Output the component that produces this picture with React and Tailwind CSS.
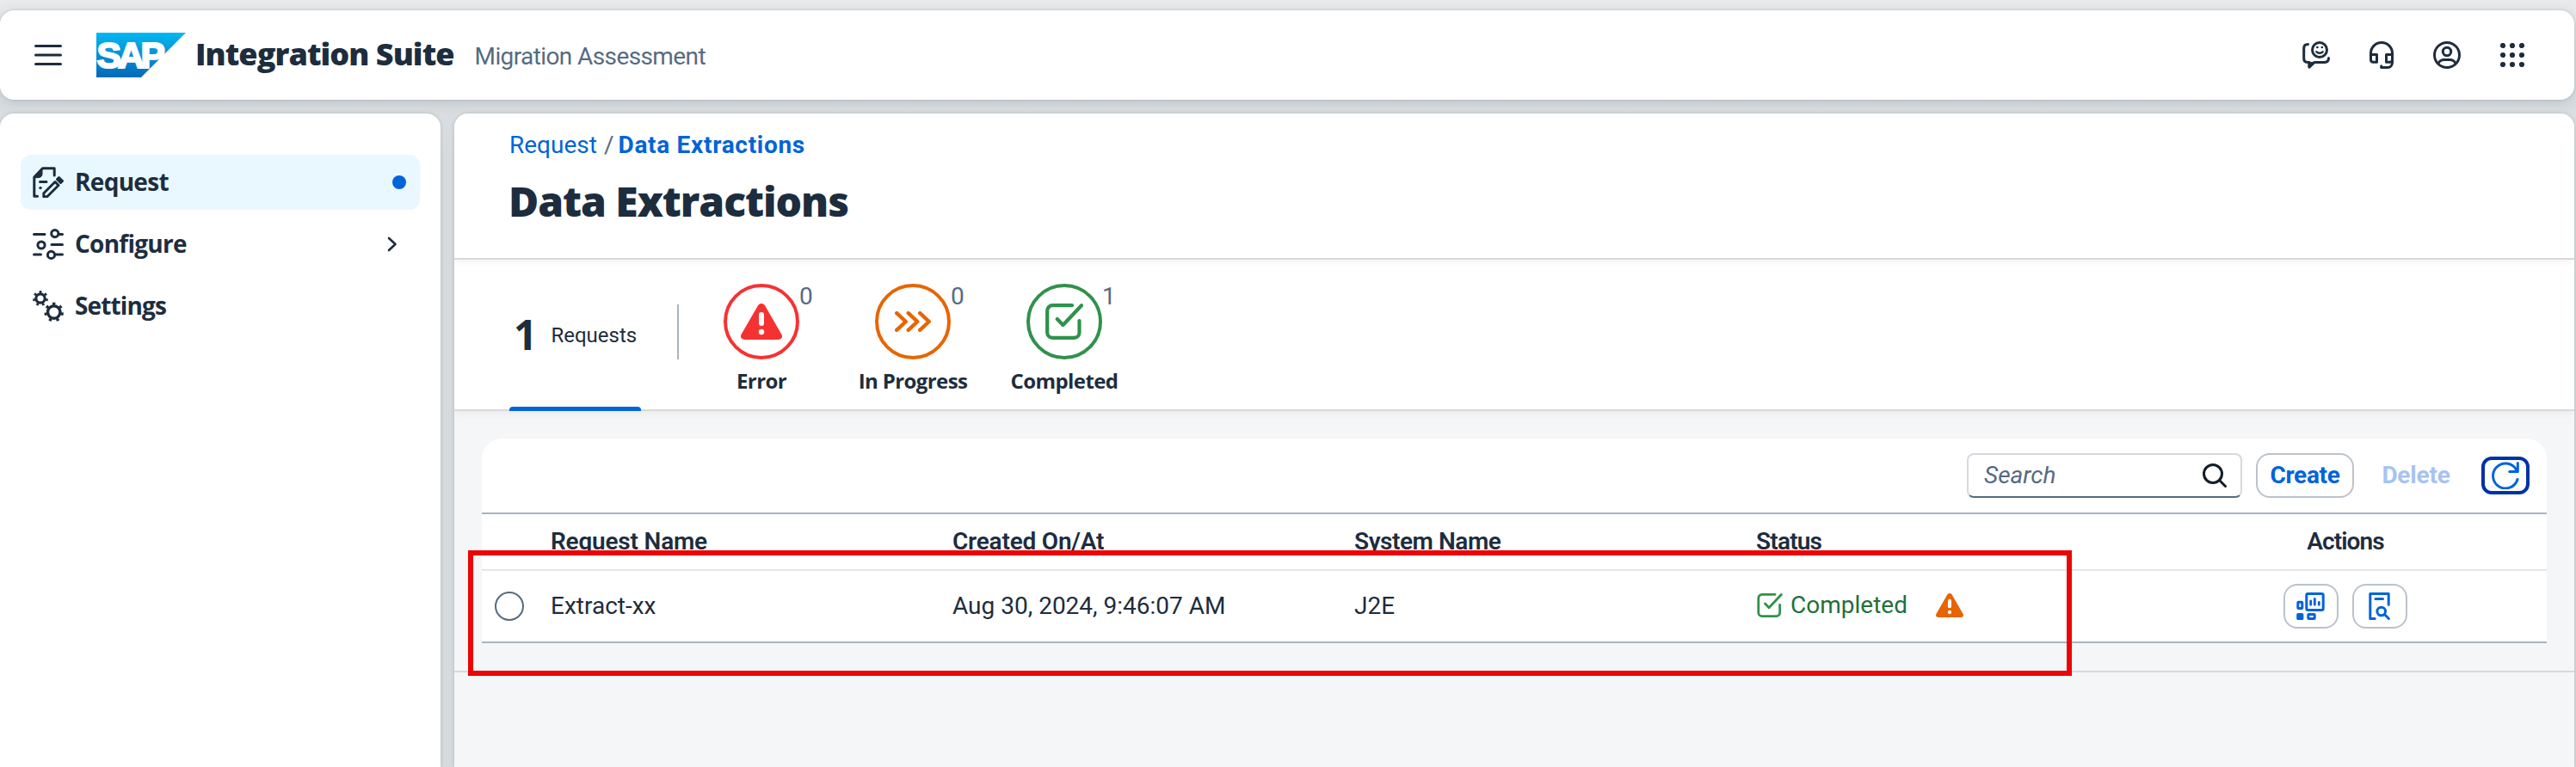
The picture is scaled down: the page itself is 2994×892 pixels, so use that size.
import React from "react";

const Stroke = ({ w, h, sw = 3, className = "", children }) => (
  <svg
    width={w}
    height={h}
    viewBox={`0 0 ${w} ${h}`}
    fill="none"
    stroke="currentColor"
    strokeWidth={sw}
    strokeLinecap="round"
    strokeLinejoin="round"
    className={`shrink-0 ${className}`}
  >
    {children}
  </svg>
);

const MenuIcon = () => (
  <Stroke w={32} h={24} sw={3}>
    <path d="M1.5 1.5h29M1.5 12h29M1.5 22.5h29" />
  </Stroke>
);

const SapLogo = () => (
  <svg width="104" height="52" viewBox="0 0 104 52" className="shrink-0">
    <defs>
      <linearGradient id="sap" x1="0" y1="0" x2="0" y2="1">
        <stop offset="0" stopColor="#00b8f1" />
        <stop offset="0.45" stopColor="#0a93da" />
        <stop offset="1" stopColor="#006ab8" />
      </linearGradient>
    </defs>
    <path d="M0 0h104L52 52H0z" fill="url(#sap)" />
    <text
      x="0.500"
      y="41.300"
      textLength="75.500"
      lengthAdjust="spacingAndGlyphs"
      fill="#fff"
      stroke="#fff"
      strokeWidth="2.200"
      className="font-['Liberation_Sans',sans-serif] text-[43px] font-bold tracking-[-4px]"
    >
      SAP
    </text>
  </svg>
);

const FeedbackIcon = () => (
  <Stroke w={32} h={32}>
    <path d="M6.5 3.4C3.5 3.4 1.7 5 1.7 8v12c0 3 1.5 4.400 4.500 4.400h1.900v5.500l5.900-5.500h12c3 0 4.500-1.500 4.500-4.800" />
    <path d="M8 25.500v4.500l4.500-4.500z" fill="currentColor" />
    <circle cx="20" cy="10" r="8.500" />
    <path d="M16.300 12.200c1.700 2 5.700 2 7.400 0" strokeWidth="2.400" />
    <path d="M17.300 7h.1M22.800 7h.1" strokeWidth="2.600" />
  </Stroke>
);

const HeadsetIcon = () => (
  <Stroke w={28} h={32}>
    <path d="M1.500 16v-2a12.500 12.500 0 0 1 25 0v10.500c0 3.500-2 6-5.500 6h-7.300v-1.800" />
    <path d="M1.500 15.500h7v8.800h-4c-2 0-3-1-3-3zM26.500 15.500h-7v8.800h4c2 0 3-1 3-3z" />
  </Stroke>
);

const UserIcon = () => (
  <Stroke w={32} h={32}>
    <circle cx="16" cy="16" r="14.500" />
    <circle cx="16" cy="12" r="4.700" />
    <path d="M6 25.500c1.500-2.600 3.500-4 6.500-4h7c3 0 5 1.400 6.500 4" />
  </Stroke>
);

const GridIcon = () => (
  <svg width="28" height="28" viewBox="0 0 28 28" fill="currentColor" className="shrink-0">
    {[3, 14, 25].map((y) => [3, 14, 25].map((x) => <circle key={`${x}-${y}`} cx={x} cy={y} r="3.100" />))}
  </svg>
);

const RequestIcon = () => (
  <Stroke w={36} h={36}>
    <path d="M5.500 34.300H1.800V12L11.500 1.800h13.700V10" />
    <path d="M2 12.500L11 2.500v5.500c0 3-1.500 4.500-4.500 4.500z" fill="currentColor" strokeWidth="1" />
    <path d="M8.500 17.500h7.500M8.700 24.500h.6" />
    <path d="M12.800 34.700v-4L26 17.500l4 4L16.800 34.700z" />
    <path d="M30.500 12.500l4 4-2 2-4-4z" fill="currentColor" />
  </Stroke>
);

const ConfigureIcon = () => (
  <Stroke w={36} h={36}>
    <path d="M1.500 6.500H14M31 6.500h3.500M22 18.500h12.500M1.500 30H9.500M26 30h8.500" />
    <circle cx="25.800" cy="5.600" r="4.100" />
    <circle cx="10" cy="19" r="4.100" />
    <circle cx="21.500" cy="30.400" r="4.100" />
  </Stroke>
);

const GearsIcon = () => (
  <svg width="36" height="36" viewBox="0 0 36 36" fill="none" stroke="currentColor" className="shrink-0">
    <circle cx="9" cy="9" r="5.200" strokeWidth="3.200" />
    <circle cx="9" cy="9" r="7.500" strokeWidth="3" pathLength="70" strokeDasharray="4 6" transform="rotate(-100 9 9)" />
    <circle cx="24.700" cy="25" r="7.200" strokeWidth="3.400" />
    <circle cx="24.700" cy="25" r="9.700" strokeWidth="3.200" pathLength="70" strokeDasharray="3.800 6.200" transform="rotate(-100 24.700 25)" />
  </svg>
);

const WarningIcon = ({ w, h }) => (
  <svg width={w} height={h} viewBox="0 0 48 42" className="shrink-0">
    <path d="M20 2.300c2-3.100 6-3.100 8 0l19.200 33.200c1.900 3.300.3 6.500-3.500 6.500H4.300C.5 42-1.100 38.800.8 35.500z" fill="currentColor" />
    <rect x="21" y="10" width="6" height="16" rx="3" fill="#fff" />
    <circle cx="24" cy="33" r="3.200" fill="#fff" />
  </svg>
);

const CheckIcon = ({ w, h }) => (
  <svg
    width={w}
    height={h}
    viewBox="0 0 44 42"
    fill="none"
    stroke="currentColor"
    strokeWidth="4.200"
    strokeLinecap="round"
    strokeLinejoin="round"
    className="shrink-0"
  >
    <path d="M31 2.200H8.200a6 6 0 0 0-6 6v25.600a6 6 0 0 0 6 6H33.500a6 6 0 0 0 6-6V20" />
    <path d="M13.800 18l6.700 7L42 2.300" />
  </svg>
);

const ProgressIcon = () => (
  <Stroke w={42} h={24} sw={4.4}>
    <path d="M2.200 2.200L12.800 12 2.200 21.800M15.700 2.200L26.300 12 15.700 21.800M29.200 2.200L39.800 12 29.200 21.800" />
  </Stroke>
);

const SearchIcon = () => (
  <Stroke w={28} h={28}>
    <circle cx="12" cy="12" r="10.500" />
    <path d="M19.800 19.800l6.700 6.700" />
  </Stroke>
);

const RefreshIcon = () => (
  <Stroke w={32} h={32}>
    <path d="M30 20.500A14.500 14.500 0 1 1 28.500 9" />
    <path d="M30.300 1.500v10h-9.600" />
    <path d="M29.800 7.500v3.500h-3.500z" fill="currentColor" strokeWidth="1" />
  </Stroke>
);

const DashboardIcon = () => (
  <Stroke w={34} h={32}>
    <rect x="11.800" y="1.500" width="19.400" height="19" rx="1.800" />
    <path d="M16.700 10v4.300M21.300 7.500v6.800M26.300 11.500v2.800" strokeWidth="2.800" />
    <rect x="1.800" y="11.300" width="5" height="7.200" rx=".6" />
    <rect x="1.500" y="25.200" width="5.600" height="5.600" rx=".6" fill="currentColor" strokeWidth="2.600" />
    <rect x="13.800" y="25.500" width="7.400" height="5" rx=".6" />
  </Stroke>
);

const InspectIcon = () => (
  <Stroke w={26} h={32}>
    <path d="M7.200 30.500H1.800V1.500h21.400V14.200" />
    <path d="M8 7.500h8.500" />
    <circle cx="14.700" cy="22" r="4.800" />
    <path d="M18.500 25.500l4.900 5" />
  </Stroke>
);

const NavItem = ({ icon, label, tracking, active, end }) => (
  <div className={`flex h-16 items-center rounded-xl pl-[14px] pr-4 ${active ? "bg-[#e9f8ff]" : ""}`}>
    {icon}
    <span className={`ml-[13px] -mt-[3px] flex-1 font-['Open_Sans',sans-serif] text-[28px] leading-9 font-bold ${tracking}`}>
      {label}
    </span>
    {end}
  </div>
);

const FilterTab = ({ color, icon, count, label }) => (
  <div className="flex w-44 flex-col items-center pt-7">
    <div className={`relative flex size-[88px] items-center justify-center rounded-full border-4 ${color}`}>
      {icon}
      <span className="absolute left-[84px] top-[-5px] text-[28px] leading-8 text-[#556b82]">{count}</span>
    </div>
    <span className="mt-[9px] font-['Open_Sans',sans-serif] text-2xl leading-8 font-bold tracking-[-0.6px]">{label}</span>
  </div>
);

const ActionButton = ({ children }) => (
  <button className="flex h-[52px] w-16 items-center justify-center rounded-2xl border-2 border-[#bcc3ca] bg-white text-[#0064d9]">
    {children}
  </button>
);

const GRID = "grid grid-cols-[64px_467px_467px_467px_467px_468px] items-center";

export default function App() {
  return (
    <div className="flex h-[892px] w-[2994px] flex-col overflow-hidden bg-[#e3e6e8] bg-linear-to-b from-[#e9eaec] from-0% to-[#d5dadd] to-20% pt-3 font-['Roboto',sans-serif] text-[#1d2d3e]">
      <header className="z-10 mr-0.5 flex h-[104px] shrink-0 items-center rounded-2xl bg-white pl-10 pr-[58px] shadow-[0_0_3px_rgba(34,53,72,0.2),0_4px_16px_rgba(34,53,72,0.16)]">
        <MenuIcon />
        <div className="ml-10">
          <SapLogo />
        </div>
        <h1 className="ml-[11px] -mt-[3px] font-['Open_Sans',sans-serif] text-[36px] leading-[48px] font-extrabold tracking-[-0.95px]">
          Integration Suite
        </h1>
        <h2 className="ml-[24px] mt-[4px] flex-1 text-[28px] leading-9 tracking-[-0.6px] text-[#556b82]">Migration Assessment</h2>
        <div className="flex items-center">
          <FeedbackIcon />
          <div className="ml-[46px]">
            <HeadsetIcon />
          </div>
          <div className="ml-[46px]">
            <UserIcon />
          </div>
          <div className="ml-[46px]">
            <GridIcon />
          </div>
        </div>
      </header>

      <div className="mt-4 mr-0.5 flex min-h-0 flex-1 gap-4">
        <nav className="flex w-[512px] shrink-0 flex-col gap-2 rounded-t-2xl bg-white px-6 pt-12 shadow-[0_0_4px_rgba(34,53,72,0.2)]">
          <NavItem active icon={<RequestIcon />} label="Request" tracking="tracking-[-0.7px]" end={<span className="size-4 rounded-full bg-[#0064d9]" />} />
          <NavItem
            icon={<ConfigureIcon />}
            label="Configure"
            tracking="tracking-[-0.75px]"
            end={
              <Stroke w={12} h={18} sw={2.6} className="mr-[10px]">
                <path d="M2 2l7.500 7L2 16" />
              </Stroke>
            }
          />
          <NavItem icon={<GearsIcon />} label="Settings" tracking="tracking-[-0.85px]" />
        </nav>

        <main className="flex min-w-0 flex-1 flex-col overflow-hidden rounded-t-2xl bg-[#f5f6f7] shadow-[0_0_4px_rgba(34,53,72,0.2)]">
          <section className="z-[3] h-[170px] shrink-0 border-b-2 border-[#d9d9d9] bg-white pl-16 pt-[19px] shadow-[0_2px_8px_rgba(0,0,0,0.06)]">
            <div className="flex text-[28px] leading-9">
              <a className="text-[#0064d9]">Request</a>
              <span className="ml-[8px] text-[#556b82]">/</span>
              <a className="ml-[5px] font-bold tracking-[0.7px] text-[#0064d9]">Data Extractions</a>
            </div>
            <h3 className="mt-[17px] -ml-px font-['Open_Sans',sans-serif] text-[48px] leading-[60px] font-extrabold tracking-[-1.05px]">
              Data Extractions
            </h3>
          </section>

          <section className="z-[2] flex h-[176px] shrink-0 border-b-2 border-[#d9d9d9] bg-white pl-16 shadow-[0_2px_8px_rgba(0,0,0,0.06)]">
            <div className="relative flex w-[153px] items-center">
              <span className="ml-[5px] font-['Open_Sans',sans-serif] text-[48px] leading-[60px] font-bold">1</span>
              <span className="ml-[16px] mt-px text-2xl leading-8">Requests</span>
              <span className="absolute inset-x-0 -bottom-0.5 h-[5px] rounded-t bg-[#0064d9]" />
            </div>
            <div className="ml-[42px] mt-[52px] h-16 w-0.5 bg-[#a9b4be]" />
            <div className="ml-[8px] flex">
              <FilterTab color="border-[#f53232] text-[#f53232]" icon={<WarningIcon w={48} h={42} />} count="0" label="Error" />
              <FilterTab color="border-[#e76500] text-[#e76500]" icon={<ProgressIcon />} count="0" label="In Progress" />
              <FilterTab color="border-[#30914c] text-[#30914c]" icon={<CheckIcon w={44} h={42} />} count="1" label="Completed" />
            </div>
          </section>

          <section className="relative h-[304px] shrink-0 border-b-2 border-[#d9d9d9] px-8 pt-8">
            <div className="rounded-t-3xl bg-white">
              <div className="flex h-[88px] items-center justify-end border-b-2 border-[#a9b4be] pr-5">
                <div className="-mt-px flex h-[52px] w-80 items-center justify-between rounded-lg border-2 border-[#d5d9de] border-b-[#556b82] pl-[18px] pr-4">
                  <span className="text-[28px] leading-9 text-[#556b82] italic">Search</span>
                  <span className="text-[#131e29]">
                    <SearchIcon />
                  </span>
                </div>
                <button className="ml-4 -mt-px h-[52px] w-[114px] rounded-2xl border-2 border-[#bcc3ca] text-[28px] leading-9 font-bold tracking-[-0.3px] text-[#0064d9]">
                  Create
                </button>
                <button className="-mt-px h-[52px] w-[148px] pr-1 text-[28px] leading-9 font-bold tracking-[-0.2px] text-[#a6c3f0]">
                  Delete
                </button>
                <button className="-mt-px flex h-11 w-14 items-center justify-center rounded-xl border-4 border-[#0032a5] text-[#0064d9]">
                  <RefreshIcon />
                </button>
              </div>

              <div className={`${GRID} h-[66px] border-b-2 border-[#e5e5e5] text-[28px] leading-9 font-semibold`}>
                <span />
                <span className="pl-4 tracking-[-0.2px]">Request Name</span>
                <span className="pl-4 tracking-[-0.2px]">Created On/At</span>
                <span className="pl-4 tracking-[-0.45px]">System Name</span>
                <span className="pl-4 tracking-[-0.8px]">Status</span>
                <span className="text-center tracking-[-0.9px]">Actions</span>
              </div>

              <div className={`${GRID} h-[84px] border-b-2 border-[#a9b4be] text-[28px] leading-9`}>
                <span className="ml-[15px] size-[34px] rounded-full border-2 border-[#556b82]" />
                <span className="pl-4">Extract-xx</span>
                <span className="pl-4">Aug 30, 2024, 9:46:07 AM</span>
                <span className="pl-4">J2E</span>
                <span className="flex items-center pb-0.5 pl-[17px] text-[#30914c]">
                  <CheckIcon w={30} h={28} />
                  <span className="ml-[9px] text-[#256f3a]">Completed</span>
                  <span className="ml-[33px] text-[#e76500]">
                    <WarningIcon w={32} h={28} />
                  </span>
                </span>
                <span className="flex justify-center gap-4">
                  <ActionButton>
                    <DashboardIcon />
                  </ActionButton>
                  <ActionButton>
                    <InspectIcon />
                  </ActionButton>
                </span>
              </div>
            </div>
            <div className="absolute left-4 top-[162px] h-[146px] w-[1864px] border-6 border-[#eb0505]" />
          </section>
        </main>
      </div>
    </div>
  );
}
